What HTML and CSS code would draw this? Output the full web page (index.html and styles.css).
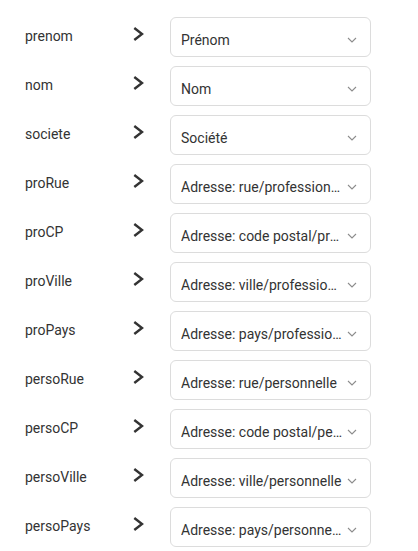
FILE: index.html
```html
<!DOCTYPE html>
<html lang="fr">
<head>
<meta charset="utf-8">
<title>Mapping</title>
<link rel="stylesheet" href="styles.css">
</head>
<body>
<div class="list">
  <div class="row">
    <div class="label">prenom</div>
    <svg class="arrow" viewBox="0 0 24 24"><polyline points="6.3,6 14,12 6.3,18"/></svg>
    <div class="select"><span class="value">Prénom</span><svg class="caret" viewBox="0 0 10 6"><polyline points="1,1 5,5 9,1"/></svg></div>
  </div>
  <div class="row">
    <div class="label">nom</div>
    <svg class="arrow" viewBox="0 0 24 24"><polyline points="6.3,6 14,12 6.3,18"/></svg>
    <div class="select"><span class="value">Nom</span><svg class="caret" viewBox="0 0 10 6"><polyline points="1,1 5,5 9,1"/></svg></div>
  </div>
  <div class="row">
    <div class="label">societe</div>
    <svg class="arrow" viewBox="0 0 24 24"><polyline points="6.3,6 14,12 6.3,18"/></svg>
    <div class="select"><span class="value">Société</span><svg class="caret" viewBox="0 0 10 6"><polyline points="1,1 5,5 9,1"/></svg></div>
  </div>
  <div class="row">
    <div class="label">proRue</div>
    <svg class="arrow" viewBox="0 0 24 24"><polyline points="6.3,6 14,12 6.3,18"/></svg>
    <div class="select"><span class="value">Adresse: rue/professionnelle</span><svg class="caret" viewBox="0 0 10 6"><polyline points="1,1 5,5 9,1"/></svg></div>
  </div>
  <div class="row">
    <div class="label">proCP</div>
    <svg class="arrow" viewBox="0 0 24 24"><polyline points="6.3,6 14,12 6.3,18"/></svg>
    <div class="select"><span class="value">Adresse: code postal/professionnelle</span><svg class="caret" viewBox="0 0 10 6"><polyline points="1,1 5,5 9,1"/></svg></div>
  </div>
  <div class="row">
    <div class="label">proVille</div>
    <svg class="arrow" viewBox="0 0 24 24"><polyline points="6.3,6 14,12 6.3,18"/></svg>
    <div class="select"><span class="value">Adresse: ville/professionnelle</span><svg class="caret" viewBox="0 0 10 6"><polyline points="1,1 5,5 9,1"/></svg></div>
  </div>
  <div class="row">
    <div class="label">proPays</div>
    <svg class="arrow" viewBox="0 0 24 24"><polyline points="6.3,6 14,12 6.3,18"/></svg>
    <div class="select"><span class="value">Adresse: pays/professionnelle</span><svg class="caret" viewBox="0 0 10 6"><polyline points="1,1 5,5 9,1"/></svg></div>
  </div>
  <div class="row">
    <div class="label">persoRue</div>
    <svg class="arrow" viewBox="0 0 24 24"><polyline points="6.3,6 14,12 6.3,18"/></svg>
    <div class="select"><span class="value">Adresse: rue/personnelle</span><svg class="caret" viewBox="0 0 10 6"><polyline points="1,1 5,5 9,1"/></svg></div>
  </div>
  <div class="row">
    <div class="label">persoCP</div>
    <svg class="arrow" viewBox="0 0 24 24"><polyline points="6.3,6 14,12 6.3,18"/></svg>
    <div class="select"><span class="value">Adresse: code postal/personnelle</span><svg class="caret" viewBox="0 0 10 6"><polyline points="1,1 5,5 9,1"/></svg></div>
  </div>
  <div class="row">
    <div class="label">persoVille</div>
    <svg class="arrow" viewBox="0 0 24 24"><polyline points="6.3,6 14,12 6.3,18"/></svg>
    <div class="select"><span class="value">Adresse: ville/personnelle</span><svg class="caret" viewBox="0 0 10 6"><polyline points="1,1 5,5 9,1"/></svg></div>
  </div>
  <div class="row">
    <div class="label">persoPays</div>
    <svg class="arrow" viewBox="0 0 24 24"><polyline points="6.3,6 14,12 6.3,18"/></svg>
    <div class="select"><span class="value">Adresse: pays/personnelle</span><svg class="caret" viewBox="0 0 10 6"><polyline points="1,1 5,5 9,1"/></svg></div>
  </div>
</div>
</body>
</html>
```

FILE: styles.css
```css
html, body {
  margin: 0;
  padding: 0;
  background: #ffffff;
}

body {
  font-family: Roboto, "Liberation Sans", Arial, sans-serif;
  font-size: 14px;
  line-height: 20px;
  color: #333333;
}

.list {
  display: flex;
  flex-direction: column;
  gap: 9px;
  padding-top: 17px;
}

.row {
  display: flex;
  align-items: flex-start;
  height: 40px;
}

.label {
  flex: none;
  width: 103px;
  padding-left: 25px;
  margin-top: 9px;
  color: #333333;
}

.arrow {
  flex: none;
  width: 24px;
  height: 24px;
  margin-top: 5px;
}

.arrow polyline {
  fill: none;
  stroke: #333333;
  stroke-width: 2.4;
  stroke-linejoin: miter;
}

.select {
  flex: none;
  box-sizing: border-box;
  width: 201px;
  height: 40px;
  margin-left: 18px;
  border: 1px solid #dcdcdc;
  border-radius: 6px;
  display: flex;
  align-items: flex-start;
  padding: 12px 13px 0 10px;
  background: #ffffff;
}

.value {
  flex: 1;
  min-width: 0;
  overflow: hidden;
  white-space: nowrap;
  text-overflow: ellipsis;
  margin-right: 3.5px;
  color: #333333;
}

.caret {
  flex: none;
  width: 10px;
  height: 6px;
  margin-top: 7px;
}

.caret polyline {
  fill: none;
  stroke: #8c8c8c;
  stroke-width: 1.1;
}
```
